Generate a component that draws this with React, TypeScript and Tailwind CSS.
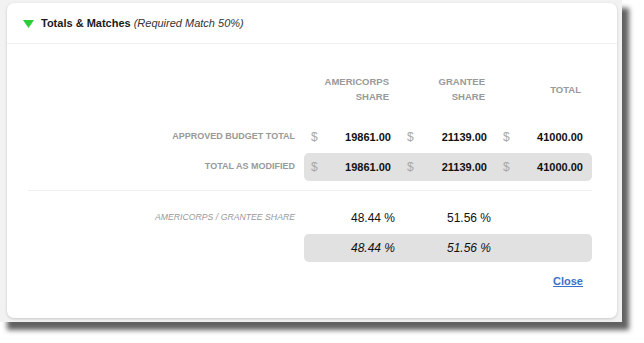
import React from "react";

const v = { a: "19861.00", b: "21139.00", c: "41000.00" };

function Money({ v }: { v: string }) {
  return (
    <div className="flex items-center justify-between pl-[7px] pr-[9px]">
      <span className="text-[12px] text-[#a8a8a8]">$</span>
      <span className="text-[11px] font-bold text-[#111]">{v}</span>
    </div>
  );
}

export default function App() {
  return (
    <div className="w-[644px] h-[343px] bg-white" style={{ fontFamily: '"Liberation Sans", Arial, sans-serif' }}>
      <div className="w-[622px] h-[322px] bg-[#f2f2f2] pt-[3px] pl-[7px] shadow-[7px_8px_5px_rgba(0,0,0,0.62)]">
        <div className="w-[610px] h-[315px] bg-white rounded-[7px] shadow-[0_1px_3px_rgba(0,0,0,0.18)] flex flex-col">
          <div className="h-[41px] border-b border-[#f0f0f0] flex items-center pl-[16px] pt-[1px]">
            <svg width="11" height="8" viewBox="0 0 11 8" className="mr-[7px]">
              <polygon points="0,0 11,0 5.5,8" fill="#2fcc3a" />
            </svg>
            <span className="text-[11px] font-bold text-[#1a1a1a]">Totals &amp; Matches</span>
            <span className="text-[11px] italic text-[#333] ml-[3px]">(Required Match 50%)</span>
          </div>
          <div className="pl-[21px] pr-[25px]">
            <div className="flex h-[30px] mt-[30px] items-center">
              <div className="w-[267px]" />
              <div className="ml-[9px] grid grid-cols-3 w-[288px] text-[9.5px] font-bold text-[#999] leading-[15px]">
                <div className="text-right pr-[11px]">AMERICORPS<br />SHARE</div>
                <div className="text-right pr-[11px]">GRANTEE<br />SHARE</div>
                <div className="flex items-center justify-end pr-[11px]">TOTAL</div>
              </div>
            </div>
            <div className="flex h-[28px] items-center mt-[19px]">
              <div className="w-[267px] text-right text-[9px] font-bold text-[#999]">APPROVED BUDGET TOTAL</div>
              <div className="ml-[9px] grid grid-cols-3 w-[288px]">
                <Money v={v.a} />
                <Money v={v.b} />
                <Money v={v.c} />
              </div>
            </div>
            <div className="flex h-[28px] items-center mt-[2px]">
              <div className="w-[267px] text-right text-[9px] font-bold text-[#999]">TOTAL AS MODIFIED</div>
              <div className="ml-[9px] grid grid-cols-3 w-[288px] h-[28px] items-center bg-[#e1e1e1] rounded-[5px]">
                <Money v={v.a} />
                <Money v={v.b} />
                <Money v={v.c} />
              </div>
            </div>
            <div className="mt-[9px] h-px bg-[#f0f0f0]" />
            <div className="flex h-[28px] items-center mt-[13px]">
              <div className="w-[267px] text-right text-[8.7px] italic text-[#999]">AMERICORPS / GRANTEE SHARE</div>
              <div className="ml-[9px] grid grid-cols-3 w-[288px] text-[12px] text-[#111]">
                <div className="text-right pr-[5px]">48.44 %</div>
                <div className="text-right pr-[5px]">51.56 %</div>
                <div />
              </div>
            </div>
            <div className="flex h-[28px] items-center mt-[2px]">
              <div className="w-[267px]" />
              <div className="ml-[9px] grid grid-cols-3 w-[288px] h-[28px] items-center bg-[#e1e1e1] rounded-[5px] text-[12px] italic text-[#111]">
                <div className="text-right pr-[5px]">48.44 %</div>
                <div className="text-right pr-[5px]">51.56 %</div>
                <div />
              </div>
            </div>
            <div className="mt-[11px] flex justify-end pr-[9px] h-[16px] items-center">
              <a href="#" className="text-[11px] font-bold text-[#3b6fc9] underline">Close</a>
            </div>
          </div>
        </div>
      </div>
    </div>
  );
}
